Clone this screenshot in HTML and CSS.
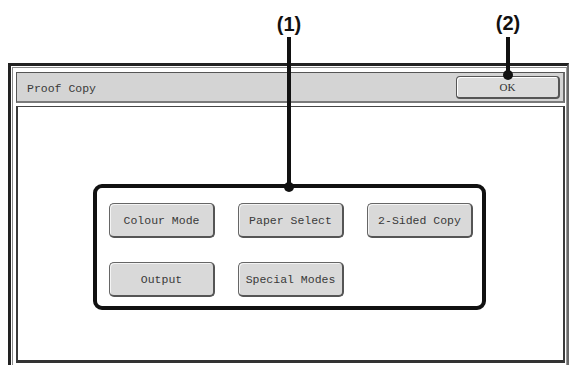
FILE: index.html
```html
<!DOCTYPE html>
<html>
<head>
<meta charset="utf-8">
<link rel="stylesheet" href="styles.css">
</head>
<body>
<div class="page">
  <div class="window">
    <div class="inner">
      <div class="titlebar">
        <span class="title">Proof Copy</span>
        <button class="ok">OK</button>
      </div>
      <div class="content">
        <div class="group">
          <button class="btn">Colour Mode</button>
          <button class="btn">Paper Select</button>
          <button class="btn">2-Sided Copy</button>
          <button class="btn">Output</button>
          <button class="btn">Special Modes</button>
        </div>
      </div>
    </div>
  </div>

  <div class="callout c1">
    <span class="label">(1)</span>
    <span class="stem"></span>
    <span class="dot"></span>
  </div>
  <div class="callout c2">
    <span class="label">(2)</span>
    <span class="stem"></span>
    <span class="dot"></span>
  </div>
</div>
</body>
</html>
```

FILE: styles.css
```css
html, body {
  margin: 0;
  padding: 0;
  background: #fff;
  overflow: hidden;
}
.page {
  position: relative;
  width: 570px;
  height: 365px;
  overflow: hidden;
  padding-top: 63px;
  padding-left: 8px;
  box-sizing: border-box;
}
.window {
  width: 561px;
  height: 330px;
  box-sizing: border-box;
  border-top: 3px solid #222;
  border-left: 3px solid #222;
  border-right: 2px solid #6a6a6a;
  background: #fff;
}
.inner {
  margin: 1px 0 0 1px;
  height: 320px;
  box-sizing: border-box;
  border: 1px solid #8a8a8a;
  border-right: 1px solid #9a9a9a;
  padding: 4px 1px 0 3px;
  display: flex;
  flex-direction: column;
}
.titlebar {
  height: 31px;
  box-sizing: border-box;
  border: 1px solid #555;
  border-bottom: 2px solid #7a7a7a;
  border-right: 2px solid #6a6a6a;
  background: #d4d4d4;
  display: flex;
  align-items: center;
  justify-content: space-between;
  padding: 0 3px 0 10px;
}
.title {
  font-family: "Liberation Mono", monospace;
  font-size: 11.5px;
  color: #3a3a3a;
  padding-top: 3px;
}
.ok {
  width: 104px;
  height: 23px;
  margin-top: 1px;
  box-sizing: border-box;
  border: 1px solid #555;
  border-right: 2px solid #555;
  border-bottom: 2px solid #555;
  border-radius: 4px;
  background: #dcdcdc;
  box-shadow: inset 1px 1px 0 #fff;
  font-family: "Liberation Serif", serif;
  font-size: 11px;
  color: #333;
  padding: 0;
}
.content {
  margin-top: 3px;
  height: 257px;
  box-sizing: border-box;
  border: 2px solid #3a3a3a;
  border-top: 1px solid #444;
  border-bottom: 3px solid #333;
  background: #fff;
  padding: 77px 0 0 75px;
}
.group {
  width: 393px;
  height: 126px;
  box-sizing: border-box;
  border: 4px solid #111;
  border-radius: 9px;
  padding: 15px 0 0 12px;
  display: grid;
  grid-template-columns: repeat(3, 106px);
  grid-auto-rows: 35px;
  column-gap: 23px;
  row-gap: 24px;
  align-content: start;
}
.btn {
  box-sizing: border-box;
  border: 1px solid #666;
  border-right: 2px solid #555;
  border-bottom: 2px solid #555;
  border-radius: 5px;
  background: #d9d9d9;
  box-shadow: inset 1px 1px 0 #f4f4f4;
  font-family: "Liberation Mono", monospace;
  font-size: 11.5px;
  color: #3a3a3a;
  padding: 0;
  margin: 0;
}
.callout {
  position: absolute;
  display: block;
}
.callout .label {
  position: absolute;
  left: 0;
  top: 0;
  transform: translateX(-50%);
  font-family: "Liberation Sans", Arial, sans-serif;
  font-weight: bold;
  font-size: 20px;
  line-height: 20px;
  color: #111;
  white-space: nowrap;
}
.callout .stem {
  position: absolute;
  left: -2px;
  width: 4px;
  background: #111;
}
.callout .dot {
  position: absolute;
  left: -5px;
  width: 10px;
  height: 10px;
  border-radius: 50%;
  background: #111;
}
.c1 { left: 289px; top: 14px; }
.c1 .stem { top: 23px; height: 150px; }
.c1 .dot { top: 168px; }
.c2 { left: 508px; top: 13px; }
.c2 .stem { top: 24px; height: 38px; }
.c2 .dot { top: 57px; }
```
